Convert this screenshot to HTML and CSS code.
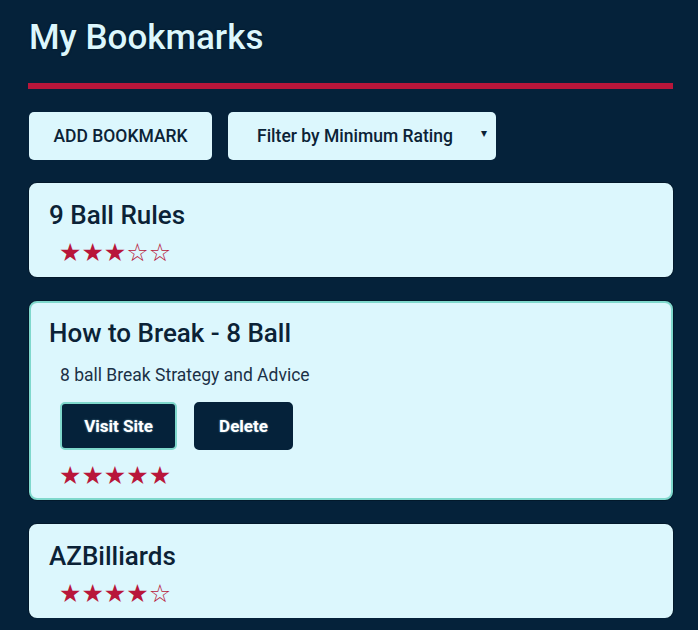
FILE: index.html
```html
<!DOCTYPE html>
<html lang="en">
<head>
<meta charset="utf-8">
<title>My Bookmarks</title>
<link rel="stylesheet" href="styles.css">
</head>
<body>
<main class="app">
  <h1 class="page-title">My Bookmarks</h1>
  <hr class="divider">
  <div class="toolbar">
    <button class="btn-light add-btn" type="button">ADD BOOKMARK</button>
    <div class="select-wrap">
      <select class="filter-select">
        <option>Filter by Minimum Rating</option>
      </select>
      <span class="select-arrow">▾</span>
    </div>
  </div>
  <ul class="list">
    <li class="card">
      <h2 class="card-title">9 Ball Rules</h2>
      <div class="stars"><span class="on">★★★</span><span class="off">☆☆</span></div>
    </li>
    <li class="card card-open">
      <h2 class="card-title">How to Break - 8 Ball</h2>
      <p class="desc">8 ball Break Strategy and Advice</p>
      <div class="actions">
        <button class="btn-dark btn-focus" type="button">Visit Site</button>
        <button class="btn-dark btn-delete" type="button">Delete</button>
      </div>
      <div class="stars stars-open"><span class="on">★★★★★</span></div>
    </li>
    <li class="card">
      <h2 class="card-title">AZBilliards</h2>
      <div class="stars"><span class="on">★★★★</span><span class="off">☆</span></div>
    </li>
  </ul>
</main>
</body>
</html>
```

FILE: styles.css
```css
* { box-sizing: border-box; }
html, body { margin: 0; padding: 0; }
body {
  background: #05223a;
  font-family: Roboto, "Liberation Sans", Arial, sans-serif;
  color: #0b2236;
}
.app {
  width: 645px;
  margin-left: 28px;
  padding-top: 14px;
}
.page-title {
  margin: 0;
  padding-left: 1px;
  font-size: 35px;
  font-weight: 500;
  line-height: 48px;
  color: #dcf7fd;
  text-shadow: 0 0 2px rgba(0,0,0,0.5);
}
.divider {
  margin: 21px 0 0;
  border: 0;
  height: 6px;
  background: #b8163a;
}
.toolbar {
  display: flex;
  gap: 16px;
  margin-top: 23px;
  padding-left: 1px;
}
.btn-light {
  height: 48px;
  border: 0;
  border-radius: 5px;
  background: #dcf7fd;
  color: #0b2236;
  font-family: inherit;
  font-size: 17.5px;
  font-weight: 500;
  padding: 0;
}
.add-btn { width: 183px; }
.select-wrap {
  position: relative;
  width: 268px;
  height: 48px;
  border-radius: 5px;
  background: #dcf7fd;
}
.filter-select {
  appearance: none;
  -webkit-appearance: none;
  width: 100%;
  height: 100%;
  border: 0;
  background: transparent;
  font-family: inherit;
  font-size: 17.5px;
  font-weight: 500;
  color: #0b2236;
  padding: 0 0 0 29px;
}
.select-arrow {
  position: absolute;
  right: 9px;
  top: 14px;
  font-size: 12px;
  color: #0b2236;
  pointer-events: none;
}
.list {
  list-style: none;
  margin: 23px 0 0;
  padding: 0 0 0 1px;
  display: flex;
  flex-direction: column;
  gap: 24px;
}
.card {
  background: #dcf7fd;
  border: 2px solid #dcf7fd;
  border-radius: 8px;
  padding: 15px 18px 11px;
  box-shadow: 0 0 0 1px rgba(0,0,0,0.25);
}
.card-open { border-color: #7fd8cc; }
.card-title {
  margin: 0;
  font-size: 26px;
  font-weight: 500;
  line-height: 30px;
  color: #0b2236;
}
.stars {
  margin: 12px 0 0 10px;
  font-family: "DejaVu Sans", sans-serif;
  font-size: 25px;
  line-height: 22px;
  letter-spacing: 0;
  color: #b8163a;
}
.stars-open { margin-top: 15px; }
.desc {
  margin: 16px 0 0 11px;
  font-size: 17.5px;
  line-height: 22px;
  color: #1b3146;
}
.actions {
  display: flex;
  gap: 17px;
  margin: 16px 0 0 11px;
}
.btn-dark {
  height: 48px;
  padding: 0;
  border: 2px solid #05223a;
  border-radius: 5px;
  background: #05223a;
  color: #ffffff;
  font-family: inherit;
  font-size: 17px;
  font-weight: 700;
  text-shadow: 0 0 2px rgba(180,240,255,0.6);
}
.btn-focus {
  border-color: #7fd8cc;
  width: 117px;
}
.btn-delete { width: 99px; }
```
